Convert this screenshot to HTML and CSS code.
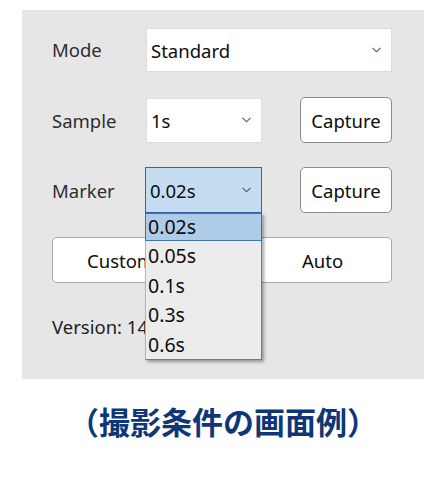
FILE: index.html
```html
<!DOCTYPE html>
<html lang="ja">
<head>
<meta charset="utf-8">
<link rel="stylesheet" href="styles.css">
</head>
<body>
<div class="panel">
  <div class="row row-mode">
    <span class="label">Mode</span>
    <div class="select select-wide">
      <span class="value">Standard</span>
      <svg class="chev" width="9" height="6" viewBox="0 0 9 6"><polyline points="0.5,0.8 4.5,4.8 8.5,0.8" fill="none" stroke="#4b5870" stroke-width="1.1"/></svg>
    </div>
  </div>
  <div class="row">
    <span class="label">Sample</span>
    <div class="select select-narrow">
      <span class="value">1s</span>
      <svg class="chev" width="9" height="6" viewBox="0 0 9 6"><polyline points="0.5,0.8 4.5,4.8 8.5,0.8" fill="none" stroke="#4b5870" stroke-width="1.1"/></svg>
    </div>
    <button class="btn">Capture</button>
  </div>
  <div class="row">
    <span class="label">Marker</span>
    <div class="select select-narrow select-open">
      <span class="value">0.02s</span>
      <svg class="chev" width="9" height="6" viewBox="0 0 9 6"><polyline points="0.5,0.8 4.5,4.8 8.5,0.8" fill="none" stroke="#4b5870" stroke-width="1.1"/></svg>
      <ul class="dropdown">
        <li class="opt opt-sel">0.02s</li>
        <li class="opt">0.05s</li>
        <li class="opt">0.1s</li>
        <li class="opt">0.3s</li>
        <li class="opt">0.6s</li>
      </ul>
    </div>
    <button class="btn">Capture</button>
  </div>
  <div class="row">
    <div class="segment">
      <span class="seg seg-left">Custom</span>
      <span class="seg seg-right">Auto</span>
    </div>
  </div>
  <div class="version">Version: 14.0.2.0315</div>
</div>
<div class="caption">（撮影条件の画面例）</div>
</body>
</html>
```

FILE: styles.css
```css
html, body {
  margin: 0;
  padding: 0;
  background: #ffffff;
}
body {
  font-family: "Noto Sans", "Open Sans", sans-serif;
}
.panel {
  margin: 10px 0 0 22px;
  width: 402px;
  height: 369px;
  box-sizing: border-box;
  background: #e6e6e6;
  padding: 18px 0 0 30px;
  display: flex;
  flex-direction: column;
  gap: 24px;
}
.row {
  display: flex;
  align-items: center;
  height: 46px;
}
.row-mode {
  height: 45px;
  align-items: flex-start;
}
.label {
  width: 94px;
  font-size: 18.5px;
  color: #2e2e2e;
}
.row-mode .label {
  line-height: 44px;
}
.select {
  position: relative;
  box-sizing: border-box;
  background: #ffffff;
  border: 1px solid #dcdcdc;
  display: flex;
  align-items: center;
  justify-content: space-between;
  padding: 0 10px 0 4px;
  font-size: 18.5px;
  color: #0c0c0c;
}
.select-wide {
  width: 246px;
  height: 44px;
}
.select-narrow {
  width: 116px;
  height: 45px;
}
.select-open {
  background: #c6dcf0;
  border-color: #3466a6;
  width: 117px;
  height: 46px;
  margin-left: -1px;
}
.chev {
  display: block;
}
.btn {
  margin-left: 38px;
  width: 92px;
  height: 46px;
  box-sizing: border-box;
  background: #ffffff;
  border: 1px solid #8c8c8c;
  border-radius: 5px;
  font-family: inherit;
  font-size: 18.5px;
  color: #0c0c0c;
  padding: 0;
}
.dropdown {
  position: absolute;
  left: -1px;
  top: 45px;
  width: 117px;
  margin: 0;
  padding: 0;
  list-style: none;
  box-sizing: border-box;
  background: #ececec;
  border: 1px solid #b4b4b4;
  border-right-color: #7a7a7a;
  border-bottom-color: #7a7a7a;
  box-shadow: 2px 2px 3px rgba(0, 0, 0, 0.35);
  z-index: 5;
}
.opt {
  height: 29.5px;
  line-height: 29.5px;
  padding-left: 2px;
  font-size: 19.5px;
  color: #0c0c0c;
  box-sizing: border-box;
}
.opt-sel {
  height: 28px;
  line-height: 26px;
  margin: -1px -1px 0 -1px;
  background: #aecbe8;
  border: 1px solid #3f72b0;
}
.segment {
  width: 340px;
  height: 46px;
  box-sizing: border-box;
  background: #ffffff;
  border: 1px solid #a8a8a8;
  border-radius: 5px;
  display: flex;
  align-items: center;
  font-size: 18.5px;
  color: #0c0c0c;
}
.seg {
  display: block;
}
.seg-left {
  width: 170px;
  padding-left: 34px;
  box-sizing: border-box;
}
.seg-right {
  padding-left: 79px;
}
.version {
  margin-top: 7px;
  font-size: 18.5px;
  color: #1e1e1e;
  line-height: 26px;
}
.caption {
  margin-top: 22px;
  text-align: center;
  font-family: "Noto Sans CJK JP", sans-serif;
  font-weight: 700;
  font-size: 31px;
  line-height: 40px;
  color: #0f3777;
}
```
